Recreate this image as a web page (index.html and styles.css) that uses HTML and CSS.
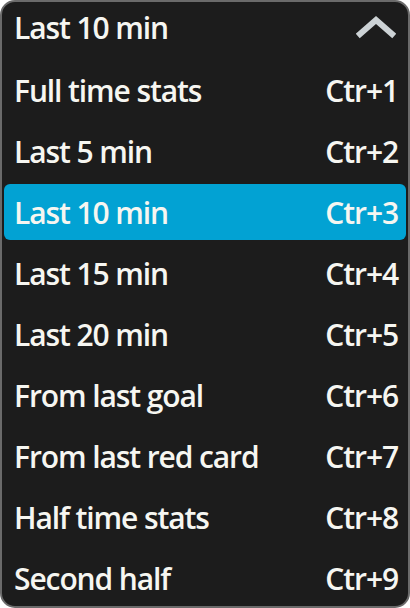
FILE: index.html
```html
<!DOCTYPE html>
<html>
<head>
<meta charset="utf-8">
<link rel="stylesheet" href="styles.css">
</head>
<body>
<div class="menu">
  <div class="header">
    <span class="label">Last 10 min</span>
    <svg class="chevron" width="40" height="24" viewBox="0 0 40 24"><polyline points="4,19 20,5 36,19" fill="none" stroke="#ccd2d5" stroke-width="6" stroke-linecap="square" stroke-linejoin="miter"/></svg>
  </div>
  <div class="item"><span class="label">Full time stats</span><span class="key">Ctr+1</span></div>
  <div class="item"><span class="label">Last 5 min</span><span class="key">Ctr+2</span></div>
  <div class="item active"><span class="label">Last 10 min</span><span class="key">Ctr+3</span></div>
  <div class="item"><span class="label">Last 15 min</span><span class="key">Ctr+4</span></div>
  <div class="item"><span class="label">Last 20 min</span><span class="key">Ctr+5</span></div>
  <div class="item"><span class="label">From last goal</span><span class="key">Ctr+6</span></div>
  <div class="item"><span class="label">From last red card</span><span class="key">Ctr+7</span></div>
  <div class="item"><span class="label">Half time stats</span><span class="key">Ctr+8</span></div>
  <div class="item"><span class="label">Second half</span><span class="key">Ctr+9</span></div>
</div>
</body>
</html>
```
FILE: styles.css
```css
html, body {
  margin: 0;
  padding: 0;
  background: #ffffff;
}
.menu {
  width: 410px;
  height: 608px;
  box-sizing: border-box;
  border: 2px solid #6a6a6a;
  border-radius: 15px;
  background: #1c1c1c;
  padding: 0 2px;
  display: flex;
  flex-direction: column;
  gap: 5px;
  font-family: "Open Sans", sans-serif;
  font-weight: 550;
  font-size: 30px;
  letter-spacing: -1.1px;
  font-variant-ligatures: none;
  color: #f6f6f1;
}
.header, .item {
  display: flex;
  align-items: center;
  justify-content: space-between;
  padding: 0 8px 0 10px;
}
.header {
  height: 55px;
  flex: none;
}
.header .label {
  margin-top: -4px;
}
.item {
  height: 56px;
  flex: none;
  border-radius: 6px;
}
.item.active {
  background: #02a2d3;
}
.chevron {
  margin-right: 2px;
  margin-top: -6px;
}
```
